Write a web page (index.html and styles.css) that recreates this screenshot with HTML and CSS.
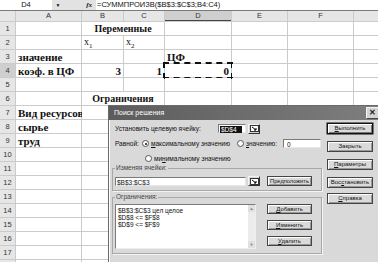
FILE: index.html
```html
<!DOCTYPE html>
<html>
<head>
  <meta charset="UTF-8">
  <link rel="stylesheet" href="styles.css">
  <title>Поиск решения</title>
</head>
<body>

<div class="excel">
  <div class="formula-bar">
    <div class="name-box">D4</div>
    <div class="nb-arrow">&#9660;</div>
    <div class="fx-area"><i>fx</i></div>
    <div class="formula">=СУММПРОИЗВ($B$3:$C$3;B4:C4)</div>
  </div>

  <div class="sheet">
    <!-- заголовки столбцов -->
    <div class="hd corner"></div>
    <div class="hd">A</div>
    <div class="hd">B</div>
    <div class="hd">C</div>
    <div class="hd hd-sel">D</div>
    <div class="hd">E</div>
    <div class="hd">F</div>
    <div class="hd"></div>

    <div class="rh">1</div><div></div><div class="merge center">Переменные</div><div></div><div></div><div></div><div></div>
    <div class="rh">2</div><div></div><div class="var">x<sub>1</sub></div><div class="var">x<sub>2</sub></div><div></div><div></div><div></div><div></div>
    <div class="rh">3</div><div>значение</div><div></div><div></div><div>ЦФ</div><div></div><div></div><div></div>
    <div class="rh rh-sel">4</div><div>коэф. в ЦФ</div><div class="num">3</div><div class="num">1</div><div class="num sel">0</div><div></div><div></div><div></div>
    <div class="rh">5</div><div></div><div></div><div></div><div></div><div></div><div></div><div></div>
    <div class="rh">6</div><div></div><div class="merge center">Ограничения</div><div></div><div></div><div></div><div></div>
    <div class="rh">7</div><div>Вид ресурсов</div><div></div><div></div><div></div><div></div><div></div><div></div>
    <div class="rh">8</div><div>сырье</div><div></div><div></div><div></div><div></div><div></div><div></div>
    <div class="rh">9</div><div>труд</div><div></div><div></div><div></div><div></div><div></div><div></div>
    <div class="rh">10</div><div></div><div></div><div></div><div></div><div></div><div></div><div></div>
    <div class="rh">11</div><div></div><div></div><div></div><div></div><div></div><div></div><div></div>
    <div class="rh">12</div><div></div><div></div><div></div><div></div><div></div><div></div><div></div>
    <div class="rh">13</div><div></div><div></div><div></div><div></div><div></div><div></div><div></div>
    <div class="rh">14</div><div></div><div></div><div></div><div></div><div></div><div></div><div></div>
    <div class="rh">15</div><div></div><div></div><div></div><div></div><div></div><div></div><div></div>
    <div class="rh">16</div><div></div><div></div><div></div><div></div><div></div><div></div><div></div>
    <div class="rh">17</div><div></div><div></div><div></div><div></div><div></div><div></div><div></div>
    <div class="rh"></div><div></div><div></div><div></div><div></div><div></div><div></div><div></div>
  </div>
</div>

<!-- окно "Поиск решения" поверх листа -->
<div class="dialog">
  <div class="dlg-title">
    <span>Поиск решения</span>
    <span class="dlg-close">&#10005;</span>
  </div>

  <div class="dlg-body">
    <div class="dlg-main">
      <div class="line">
        <span class="t-target">Установить целевую ячейку:</span>
        <span class="field f-target"><span class="hl">$D$4</span></span>
        <span class="refbtn"><svg width="9" height="7" viewBox="0 0 9 7"><rect x="0.5" y="0.5" width="8" height="6" fill="#fff" stroke="#333"/><path d="M2 2 L6 5 M6 3 V5 H4" stroke="#000" fill="none"/></svg></span>
      </div>

      <div class="line">
        <span class="t-equal">Равной:</span>
        <span class="radio on"></span><span class="t-max"><u>м</u>аксимальному значению</span>
        <span class="radio"></span><span class="t-val"><u>з</u>начению:</span>
        <span class="field f-value">0</span>
      </div>

      <div class="line l-min">
        <span class="radio"></span><span>ми<u>н</u>имальному значению</span>
      </div>

      <fieldset class="grp g-change">
        <legend>Изменяя ячейки:</legend>
        <div class="grp-row">
          <span class="field f-cells">$B$3:$C$3</span>
          <span class="refbtn"><svg width="9" height="7" viewBox="0 0 9 7"><rect x="0.5" y="0.5" width="8" height="6" fill="#fff" stroke="#333"/><path d="M2 2 L6 5 M6 3 V5 H4" stroke="#000" fill="none"/></svg></span>
          <span class="btn b-guess">Предположить</span>
        </div>
      </fieldset>

      <fieldset class="grp g-limits">
        <legend>Ограничения:</legend>
        <div class="grp-row">
          <div class="listbox">
            <div class="lb-items">
              <div>$B$3:$C$3 цел целое</div>
              <div>$D$8 &lt;= $F$8</div>
              <div>$D$9 &lt;= $F$9</div>
            </div>
            <div class="lb-scroll">
              <span class="arr">&#9650;</span>
              <span class="arr">&#9660;</span>
            </div>
          </div>
          <div class="btn-col">
            <span class="btn"><u>Д</u>обавить</span>
            <span class="btn"><u>И</u>зменить</span>
            <span class="btn"><u>У</u>далить</span>
          </div>
        </div>
      </fieldset>
    </div>

    <div class="dlg-side">
      <span class="btn b-default"><u>В</u>ыполнить</span>
      <span class="btn">Закрыть</span>
      <span class="btn b-params"><u>П</u>араметры</span>
      <span class="btn b-restore">Вос<u>с</u>тановить</span>
      <span class="btn"><u>С</u>правка</span>
    </div>
  </div>
</div>

</body>
</html>
```

FILE: styles.css
```css
/* -- лист Excel -- */
html,
body {
  margin: 0;
  padding: 0;
}

body {
  width: 378px;
  height: 262px;
  overflow: hidden;
  position: relative;
  background: #ffffff;
  font-family: "Liberation Sans", Arial, sans-serif;
}

/* строка формул */
.formula-bar {
  display: flex;
  height: 10px;
  border-bottom: 1px solid #7a7a7a;
  background: #e2e2e2;
  font-size: 7.5px;
  line-height: 10px;
  color: #111;
}

.name-box {
  width: 52px;
  background: #ffffff;
  text-align: center;
}

.nb-arrow {
  width: 12px;
  font-size: 5px;
  text-align: center;
}

.fx-area {
  width: 28px;
  text-align: right;
  padding-right: 4px;
  font-family: "Liberation Serif", serif;
  font-size: 7px;
  font-weight: bold;
}

.formula {
  flex: 1;
  background: #ffffff;
  padding-left: 1px;
  white-space: nowrap;
}

/* сетка ячеек */
.sheet {
  display: grid;
  grid-template-columns: 15px 65px 41px 40px 66px 55px 65px 1fr;
  grid-template-rows: 10px;
  grid-auto-rows: 13px;
  gap: 1px;
  background: #cbcbcb;
  font-family: "Liberation Serif", "Times New Roman", serif;
  font-weight: bold;
  font-size: 11px;
  line-height: 14px;
}

.sheet > div {
  background: #ffffff;
  padding: 0 2px;
  white-space: nowrap;
  color: #111;
}

.sheet > .hd {
  background: #e6e6e6;
  font-family: "Liberation Sans", Arial, sans-serif;
  font-weight: normal;
  font-size: 7.5px;
  line-height: 10px;
  text-align: center;
  color: #333;
}

.sheet > .hd-sel {
  background: #cfcfcf;
  border-bottom: 1px solid #444;
}

.sheet > .rh {
  background: #e6e6e6;
  font-family: "Liberation Sans", Arial, sans-serif;
  font-weight: normal;
  font-size: 7.5px;
  line-height: 13px;
  text-align: center;
  padding: 0;
  color: #333;
}

.sheet > .rh-sel {
  background: #cfcfcf;
}

.sheet > .merge {
  grid-column: span 2;
  font-size: 10px;
}

.center {
  text-align: center;
}

.num {
  text-align: right;
}

.sheet > .var {
  font-weight: normal;
  font-size: 10px;
  line-height: 11px;
}

.var sub {
  font-size: 7px;
}

/* бегущая рамка вокруг D4 */
.sheet > .sel {
  outline: 2px dashed #111;
  outline-offset: 0;
}

/* -- окно Поиск решения -- */
.dialog {
  position: absolute;
  left: 108px;
  top: 105px;
  width: 272px;
  height: 160px;
  background: #d9d9d9;
  border: 1px solid #6a6a6a;
  box-shadow: inset 1px 1px #ffffff;
  font-size: 6.5px;
  line-height: 8px;
  color: #111;
}

.dlg-title {
  height: 14px;
  display: flex;
  align-items: center;
  justify-content: space-between;
  padding: 0 2px 0 5px;
  background: linear-gradient(to right, #5c5c5c, #7e7e7e);
  color: #ffffff;
  font-size: 7px;
}

.dlg-close {
  width: 11px;
  height: 10px;
  background: #d4d4d4;
  border: 1px solid #f4f4f4;
  border-right-color: #444;
  border-bottom-color: #444;
  color: #222;
  font-size: 8px;
  line-height: 10px;
  text-align: center;
  font-weight: bold;
}

.dlg-body {
  display: flex;
  padding: 3px 0 0 3px;
}

.dlg-main {
  width: 210px;
}

.line {
  display: flex;
  align-items: center;
  height: 11px;
  padding-left: 3px;
  white-space: nowrap;
}

.line + .line {
  margin-top: 4px;
}

.l-min {
  padding-left: 33px;
}

.t-target {
  width: 103px;
}

.t-equal {
  width: 27px;
}

.t-max {
  width: 86px;
}

.t-val {
  width: 37px;
}

.field {
  display: inline-block;
  height: 9px;
  line-height: 9px;
  background: #ffffff;
  border: 1px solid #7a7a7a;
  border-right-color: #e8e8e8;
  border-bottom-color: #e8e8e8;
  box-sizing: border-box;
  padding-left: 1px;
  white-space: nowrap;
}

.f-target {
  width: 28px;
}

.hl {
  background: #111;
  color: #fff;
  padding: 0 5px 0 1px;
}

.f-value {
  width: 38px;
  padding-left: 3px;
}

.f-cells {
  width: 131px;
}

.refbtn {
  display: inline-flex;
  align-items: center;
  justify-content: center;
  width: 12px;
  height: 10px;
  box-sizing: border-box;
  margin-left: 2px;
  background: #d4d4d4;
  border: 1px solid #f4f4f4;
  border-right-color: #333;
  border-bottom-color: #333;
}

.radio {
  width: 5px;
  height: 5px;
  border-radius: 50%;
  border: 1px solid #555;
  background: #ffffff;
  margin-right: 2px;
  position: relative;
}

.radio.on::after {
  content: "";
  position: absolute;
  left: 1.5px;
  top: 1.5px;
  width: 2px;
  height: 2px;
  border-radius: 50%;
  background: #111;
}

/* группы */
.grp {
  margin: 0;
  padding: 4px 3px 4px 2px;
  border: 1px solid #a8a8a8;
  box-shadow: 1px 1px #f4f4f4;
  min-width: 0;
}

.grp legend {
  padding: 0 1px;
  color: #444;
}

.grp-row {
  display: flex;
  align-items: flex-start;
}

.g-change .grp-row {
  align-items: center;
}

.g-limits {
  margin-top: 2px;
  padding-top: 3px;
}

.btn {
  display: block;
  width: 45px;
  height: 10px;
  box-sizing: border-box;
  background: #dadada;
  border: 1px solid #444;
  box-shadow: inset 1px 1px #ffffff, inset -1px -1px #999;
  text-align: center;
  line-height: 8px;
  font-size: 6px;
  white-space: nowrap;
}

.b-guess {
  width: 45px;
  margin-left: 7px;
  font-size: 5.7px;
}

.listbox {
  display: flex;
  width: 141px;
  height: 45px;
  box-sizing: border-box;
  background: #ffffff;
  border: 1px solid #7a7a7a;
  border-right-color: #eeeeee;
  border-bottom-color: #eeeeee;
}

.lb-items {
  flex: 1;
  padding: 2px 2px;
  line-height: 7px;
}

.lb-scroll {
  width: 7px;
  display: flex;
  flex-direction: column;
  justify-content: space-between;
  background: #ececec;
}

.arr {
  height: 7px;
  background: #e0e0e0;
  color: #777;
  font-size: 4px;
  line-height: 7px;
  text-align: center;
}

.btn-col {
  display: flex;
  flex-direction: column;
  gap: 6px;
  margin-left: 11px;
  margin-top: 0;
}

.dlg-side {
  display: flex;
  flex-direction: column;
  margin-left: 5px;
  width: 46px;
}

.dlg-side .btn {
  width: 46px;
  height: 11px;
  line-height: 9px;
}

.dlg-side .btn + .btn {
  margin-top: 7px;
}

.dlg-side .b-default {
  border-color: #111;
  box-shadow: inset 1px 1px #ffffff, inset -1px -1px #777, 0 0 0 0.5px #111;
}

.dlg-side .b-params {
  margin-top: 37px;
}

.dlg-side .b-restore {
  margin-top: 28px;
}

.dlg-side .b-restore + .btn {
  margin-top: 5px;
}
```
